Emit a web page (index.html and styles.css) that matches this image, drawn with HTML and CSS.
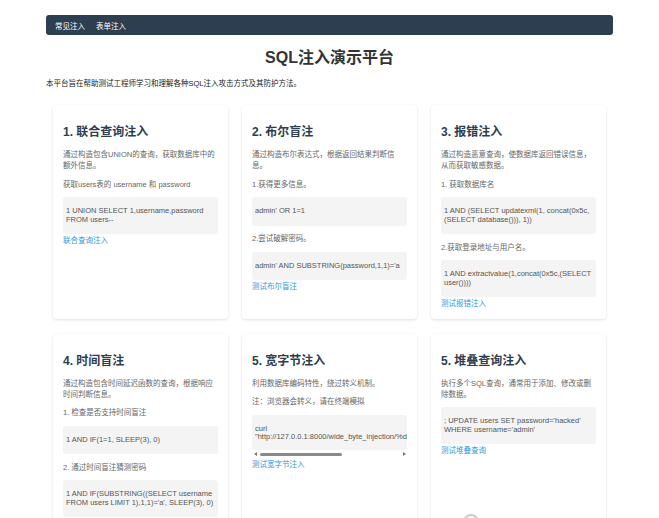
FILE: index.html
```html
<!DOCTYPE html>
<html>
<head>
  <meta charset="utf-8">
  <title>SQL注入演示平台</title>
  <link rel="stylesheet" href="styles.css">
</head>
<body>
  <div class="container">
    <nav>
      <a href="#">常见注入</a>
      <a href="#">表单注入</a>
    </nav>

    <h1>SQL注入演示平台</h1>
    <p class="intro">本平台旨在帮助测试工程师学习和理解各种SQL注入攻击方式及其防护方法。</p>

    <div class="cards">
      <div class="card">
        <h3>1. 联合查询注入</h3>
        <p>通过构造包含UNION的查询，获取数据库中的额外信息。</p>
        <p>获取users表的 username 和 password</p>
        <pre>1 UNION SELECT 1,username,password FROM users--</pre>
        <a href="#" class="test-link">联合查询注入</a>
      </div>

      <div class="card">
        <h3>2. 布尔盲注</h3>
        <p>通过构造布尔表达式，根据返回结果判断信息。</p>
        <p>1.获得更多信息。</p>
        <pre>admin' OR 1=1</pre>
        <p>2.尝试破解密码。</p>
        <pre>admin' AND SUBSTRING(password,1,1)='a</pre>
        <a href="#" class="test-link">测试布尔盲注</a>
      </div>

      <div class="card">
        <h3>3. 报错注入</h3>
        <p>通过构造恶意查询，使数据库返回错误信息，从而获取敏感数据。</p>
        <p>1. 获取数据库名</p>
        <pre>1 AND (SELECT updatexml(1, concat(0x5c, (SELECT database())), 1))</pre>
        <p>2.获取登录地址与用户名。</p>
        <pre>1 AND extractvalue(1,concat(0x5c,(SELECT user())))</pre>
        <a href="#" class="test-link">测试报错注入</a>
      </div>

      <div class="card">
        <h3>4. 时间盲注</h3>
        <p>通过构造包含时间延迟函数的查询，根据响应时间判断信息。</p>
        <p>1. 检查是否支持时间盲注</p>
        <pre>1 AND IF(1=1, SLEEP(3), 0)</pre>
        <p>2. 通过时间盲注猜测密码</p>
        <pre>1 AND IF(SUBSTRING((SELECT username FROM users LIMIT 1),1,1)='a', SLEEP(3), 0)</pre>
        <a href="#" class="test-link">测试时间盲注</a>
      </div>

      <div class="card">
        <h3>5. 宽字节注入</h3>
        <p>利用数据库编码特性，绕过转义机制。</p>
        <p>注：浏览器会转义，请在终端模拟</p>
        <pre class="scroll">curl "http://127.0.0.1:8000/wide_byte_injection/%df%27%20or%201=1%23"</pre>
        <div class="scrollbar">
          <span class="arrow left"></span>
          <div class="track"><div class="thumb"></div></div>
          <span class="arrow right"></span>
        </div>
        <a href="#" class="test-link">测试宽字节注入</a>
      </div>

      <div class="card">
        <h3>5. 堆叠查询注入</h3>
        <p>执行多个SQL查询，通常用于添加、修改或删除数据。</p>
        <pre>; UPDATE users SET password='hacked' WHERE username='admin'</pre>
        <a href="#" class="test-link">测试堆叠查询</a>
        <div class="spinner"></div>
      </div>
    </div>
  </div>
</body>
</html>
```

FILE: styles.css
```css
body { font-family: "Liberation Sans", Arial, "Noto Sans CJK SC", sans-serif; margin: 0; padding: 0; background: #fff; color: #333; }
.container { width: 567px; margin: 0 auto; padding-top: 15px; }
nav { background: #2c3e50; height: 20px; padding: 0 9px; border-radius: 3px; display: flex; align-items: center; gap: 11px; }
nav a { color: #fff; text-decoration: none; font-size: 7.5px; }
h1 { text-align: center; font-size: 16px; line-height: 19px; margin: 13px 0 10.5px; color: #333; }
.intro { font-size: 7.5px; line-height: 11px; margin: 0 0 16.5px; color: #222; }
.cards { display: grid; grid-template-columns: repeat(3, 1fr); gap: 15px 14px; padding: 0 7px; }
.card { background: #fff; border-radius: 4px; box-shadow: 0 1px 3px rgba(0, 0, 0, 0.12); padding: 10px; min-width: 0; }
.card h3 { font-size: 12px; line-height: 14px; margin: 10px 0; color: #2c3e50; }
.card p { font-size: 7.5px; line-height: 11px; margin: 7.5px 0; color: #666; }
.card pre { font-family: "Liberation Sans", Arial, "Noto Sans CJK SC", sans-serif; font-size: 7.5px; line-height: 8.5px; color: #555; background: #f4f4f4; border-radius: 3px; padding: 10px 3px; margin: 7.5px 0 0; white-space: pre-wrap; }
.card pre.scroll { overflow: hidden; padding-bottom: 8px; border-radius: 3px 3px 0 0; }
.scrollbar { display: flex; align-items: center; height: 9px; padding: 0 1px 0 2px; gap: 3px; }
.scrollbar .arrow { width: 0; height: 0; border-top: 2px solid transparent; border-bottom: 2px solid transparent; }
.scrollbar .left { border-right: 3px solid #777; }
.scrollbar .right { border-left: 3px solid #777; }
.scrollbar .track { flex: 1; }
.scrollbar .thumb { width: 82px; height: 3px; background: #8a8a8a; border-radius: 2px; }
.test-link { display: block; font-size: 7.5px; line-height: 11px; color: #3498db; text-decoration: none; margin-top: 0.5px; }
.spinner { width: 12px; height: 12px; border: 2px solid #ccc; border-radius: 50%; margin: 58px 0 0 22px; }
```
